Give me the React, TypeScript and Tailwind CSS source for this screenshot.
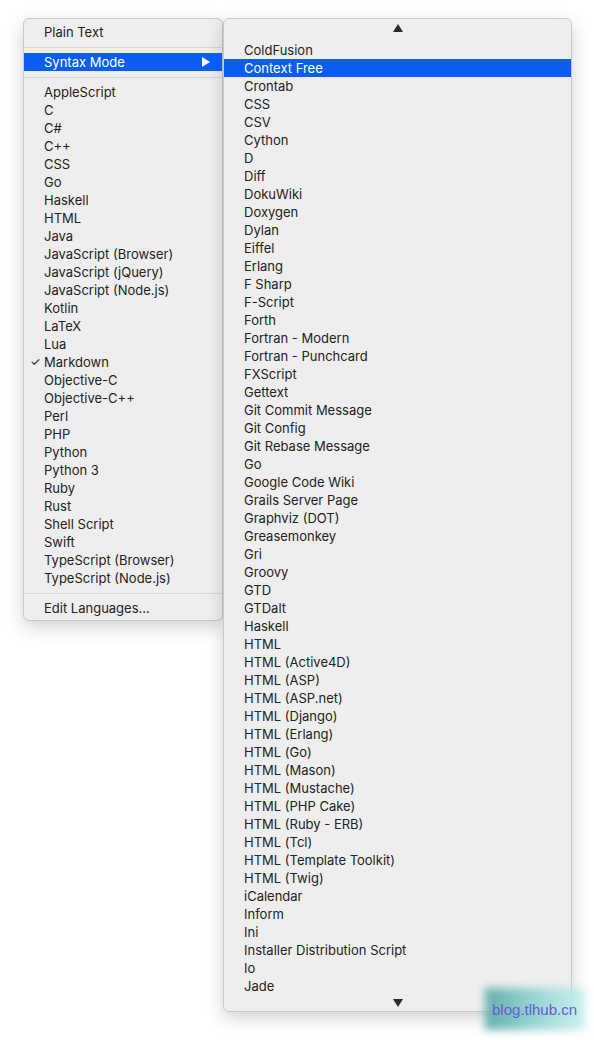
import React from "react";

const leftItems = [
  "AppleScript","C","C#","C++","CSS","Go","Haskell","HTML","Java",
  "JavaScript (Browser)","JavaScript (jQuery)","JavaScript (Node.js)","Kotlin","LaTeX","Lua",
  "Markdown","Objective-C","Objective-C++","Perl","PHP","Python","Python 3","Ruby","Rust",
  "Shell Script","Swift","TypeScript (Browser)","TypeScript (Node.js)",
];

const rightItems = [
  "ColdFusion","Context Free","Crontab","CSS","CSV","Cython","D","Diff","DokuWiki","Doxygen",
  "Dylan","Eiffel","Erlang","F Sharp","F-Script","Forth","Fortran - Modern","Fortran - Punchcard",
  "FXScript","Gettext","Git Commit Message","Git Config","Git Rebase Message","Go","Google Code Wiki",
  "Grails Server Page","Graphviz (DOT)","Greasemonkey","Gri","Groovy","GTD","GTDalt","Haskell","HTML",
  "HTML (Active4D)","HTML (ASP)","HTML (ASP.net)","HTML (Django)","HTML (Erlang)","HTML (Go)",
  "HTML (Mason)","HTML (Mustache)","HTML (PHP Cake)","HTML (Ruby - ERB)","HTML (Tcl)",
  "HTML (Template Toolkit)","HTML (Twig)","iCalendar","Inform","Ini","Installer Distribution Script",
  "Io","Jade",
];

function Sep() {
  return (
    <div className="h-[12px] flex items-center">
      <div className="h-px w-full bg-[#d6d6d6]" />
    </div>
  );
}

function Row({ label, active, checked, arrow }: { label: string; active?: boolean; checked?: boolean; arrow?: boolean }) {
  return (
    <div
      className={
        "relative h-[18px] flex items-center pl-[20px] pr-[12px] " +
        (active ? "bg-[#0b5cf0] text-white" : "text-[#222222]")
      }
    >
      {checked && (
        <span className="absolute left-[6px] top-0 h-[18px] flex items-center text-[12px]">✓</span>
      )}
      <span className="flex-1 whitespace-nowrap">{label}</span>
      {arrow && (
        <svg width="8" height="10" viewBox="0 0 8 10">
          <path d="M0 0 L8 5 L0 10 Z" fill="white" />
        </svg>
      )}
    </div>
  );
}

export default function App() {
  return (
    <div
      className="relative w-[594px] h-[1040px] bg-white overflow-hidden"
      style={{ fontFamily: "Inter, 'Noto Sans', sans-serif" }}
    >
      <div className="flex items-start pt-[18px] pl-[23px] text-[13px] leading-[18px]">
        <div className="w-[200px] bg-[#eeeeee] border border-[#c9c9c9] rounded-[6px] pt-[4px] pb-[3px] shadow-[0_6px_18px_rgba(0,0,0,0.18)]">
          <Row label="Plain Text" />
          <Sep />
          <Row label="Syntax Mode" active arrow />
          <Sep />
          {leftItems.map((l) => (
            <Row key={l} label={l} checked={l === "Markdown"} />
          ))}
          <Sep />
          <Row label="Edit Languages..." />
        </div>
        <div className="w-[349px] bg-[#eeeeee] border border-[#c9c9c9] rounded-[6px] shadow-[0_6px_18px_rgba(0,0,0,0.18)]">
          <div className="h-[22px] flex justify-center pt-[5px]">
            <svg width="10" height="8" viewBox="0 0 10 8">
              <path d="M5 0 L10 8 L0 8 Z" fill="#2b2b2b" />
            </svg>
          </div>
          {rightItems.map((l) => (
            <Row key={l} label={l} active={l === "Context Free"} />
          ))}
          <div className="h-[16px] flex justify-center pt-[4px]">
            <svg width="10" height="8" viewBox="0 0 10 8">
              <path d="M0 0 L10 0 L5 8 Z" fill="#2b2b2b" />
            </svg>
          </div>
        </div>
      </div>
      <div className="absolute left-[485px] top-[988px] w-[100px] h-[42px]">
        <div className="absolute inset-0 blur-[4px] bg-gradient-to-r from-[#55a9a6] via-[#8fd3d0] to-[#c6f2f0] opacity-90" />
        <div
          className="absolute left-[7px] top-[13px] text-[15px] leading-[18px] text-[#6a58d8] whitespace-nowrap"
          style={{ fontFamily: "'Liberation Sans', Arial, sans-serif" }}
        >
          blog.tlhub.cn
        </div>
      </div>
    </div>
  );
}
